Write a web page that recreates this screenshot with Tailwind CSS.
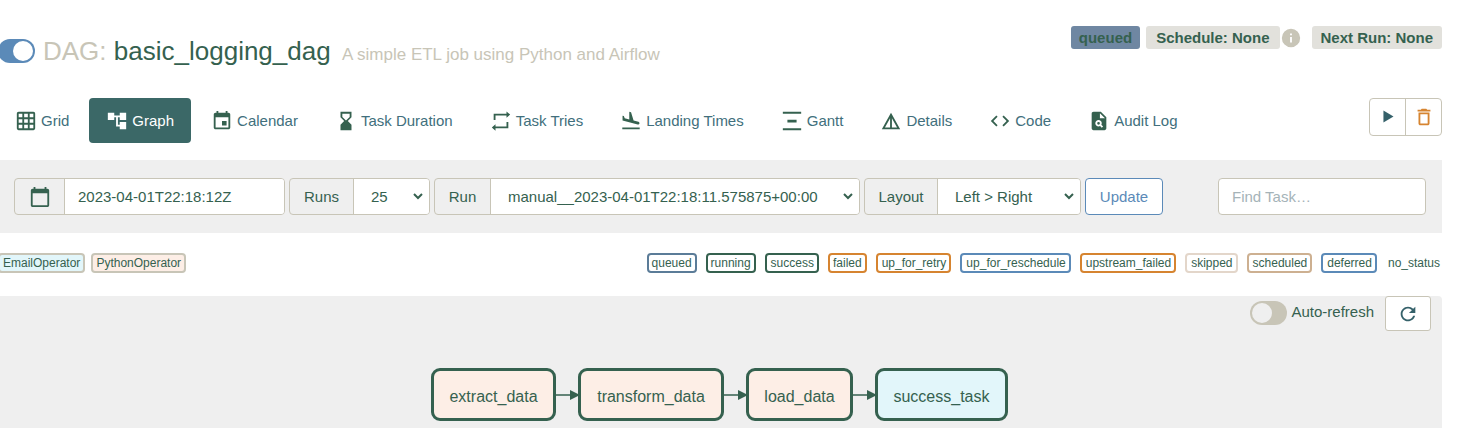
<!DOCTYPE html>
<html lang="en">
<head>
<meta charset="utf-8">
<title>basic_logging_dag - Graph - Airflow</title>
<script src="https://cdn.jsdelivr.net/npm/@tailwindcss/browser@4"></script>
</head>
<body class="overflow-x-hidden bg-white pr-[15px] font-['Liberation_Sans',Arial,sans-serif] text-[15px] leading-5 text-[#35614f]">

<header class="flex items-start justify-between pt-[26px]">
  <div class="flex items-center pt-[7px]">
    <input type="checkbox" checked aria-label="Pause/Unpause DAG" class="-ml-0.5 h-6 w-[37px] appearance-none rounded-full bg-[#5b8ab8] p-0.5 before:ml-[13px] before:block before:size-5 before:rounded-full before:bg-white">
    <h1 class="ml-2 text-[26px] leading-9 whitespace-nowrap"><span class="text-[#c8c5b7]">DAG:</span> <a href="#">basic_logging_dag</a> <small class="ml-1 text-[17px] leading-4 text-[#c8c5b7]">A simple ETL job using Python and Airflow</small></h1>
  </div>
  <div class="flex items-center font-bold leading-[23px] whitespace-nowrap">
    <a href="#" class="rounded-[3px] bg-[#6f87a2] px-2">queued</a>
    <a href="#" class="ml-1.5 rounded-[3px] bg-[#e2e1dc] px-[10px]">Schedule: None</a>
    <svg class="size-[22px] fill-[#c8c5b7]" viewBox="0 0 24 24"><path d="M12 2a10 10 0 1 0 0 20 10 10 0 0 0 0-20zm1 15h-2v-6h2v6zm0-8h-2V7h2v2z"/></svg>
    <span class="ml-2.5 rounded-[3px] bg-[#e2e1dc] px-[9px]">Next Run: None</span>
  </div>
</header>

<div class="mt-[29px] flex items-center justify-between">
  <nav class="-ml-0.5 flex gap-[3px] whitespace-nowrap text-[#416f7c]">
    <a href="#" class="flex h-[45px] items-center gap-1 px-[17px]"><svg class="size-[22px] fill-[#35614f]" viewBox="0 0 24 24"><path d="M20 2H4c-1.100 0-2 .9-2 2v16c0 1.100.9 2 2 2h16c1.100 0 2-.9 2-2V4c0-1.100-.9-2-2-2zM8 20H4v-4h4v4zm0-6H4v-4h4v4zm0-6H4V4h4v4zm6 12h-4v-4h4v4zm0-6h-4v-4h4v4zm0-6h-4V4h4v4zm6 12h-4v-4h4v4zm0-6h-4v-4h4v4zm0-6h-4V4h4v4z"/></svg>Grid</a>
    <a href="#" aria-current="page" class="flex h-[45px] items-center gap-1 rounded bg-[#3b6867] px-[17px] text-white"><svg class="size-[22px] fill-white" viewBox="0 0 24 24"><path d="M22 11V3h-7v3H9V3H2v8h7V8h2v10h4v3h7v-8h-7v3h-2V8h2v3z"/></svg>Graph</a>
    <a href="#" class="flex h-[45px] items-center gap-1 px-[17px]"><svg class="size-[22px] fill-[#35614f]" viewBox="0 0 24 24"><path d="M17 12h-5v5h5v-5zM16 1v2H8V1H6v2H5c-1.110 0-1.990.9-1.990 2L3 19c0 1.100.89 2 2 2h14c1.100 0 2-.9 2-2V5c0-1.100-.9-2-2-2h-1V1h-2zm3 18H5V8h14v11z"/></svg>Calendar</a>
    <a href="#" class="flex h-[45px] items-center gap-1 px-[17px]"><svg class="size-[22px] fill-[#35614f]" viewBox="0 0 24 24"><path d="M18 22l-.01-6L14 12l3.990-4.010L18 2H6v6l4 4-4 3.990V22h12zM8 7.500V4h8v3.500l-4 4-4-4z"/></svg>Task Duration</a>
    <a href="#" class="flex h-[45px] items-center gap-1 px-[17px]"><svg class="size-[22px] fill-[#35614f]" viewBox="0 0 24 24"><path d="M4 4h14V1.500L22 5l-4 3.500V6H6v5H4zM20 20H6v2.500L2 19l4-3.500V18h12v-5h2z"/></svg>Task Tries</a>
    <a href="#" class="flex h-[45px] items-center gap-1 px-[17px]"><svg class="size-[22px] fill-[#35614f]" viewBox="0 0 24 24"><path d="M2.500 19h19v2h-19zm16.840-3.150c.8.210 1.620-.26 1.840-1.060.210-.8-.26-1.620-1.060-1.840l-5.310-1.420-2.760-9.020L10.120 2v8.280L5.150 8.950l-.93-2.320-1.450-.39v5.170l16.570 4.440z"/></svg>Landing Times</a>
    <a href="#" class="flex h-[45px] items-center gap-1 px-[17px]"><svg class="size-[22px] fill-[#35614f]" viewBox="0 0 24 24"><path d="M22 2v2H2V2h20zM7 10.500v3h10v-3H7zM2 20v2h20v-2H2z"/></svg>Gantt</a>
    <a href="#" class="flex h-[45px] items-center gap-1 px-[17px]"><svg class="size-[22px] fill-[#35614f]" viewBox="0 0 24 24"><path d="M12 3L2 21h20L12 3zm1 5.920L18.600 19H13V8.920zm-2 0V19H5.400L11 8.920z"/></svg>Details</a>
    <a href="#" class="flex h-[45px] items-center gap-1 px-[17px]"><svg class="size-[22px] fill-[#35614f]" viewBox="0 0 24 24"><path d="M9.400 16.600L4.800 12l4.600-4.600L8 6l-6 6 6 6 1.400-1.400zm5.200 0l4.600-4.600-4.600-4.600L16 6l6 6-6 6-1.400-1.400z"/></svg>Code</a>
    <a href="#" class="flex h-[45px] items-center gap-1 px-[17px]"><svg class="size-[22px] fill-[#35614f]" viewBox="0 0 24 24"><path fill-rule="evenodd" d="M14 2H6C4.900 2 4 2.900 4 4v16c0 1.100.89 2 1.990 2H18c1.100 0 2-.9 2-2V8l-6-6zm1.040 17.450l-1.880-1.880c-1.330.71-3.010.53-4.130-.59-1.370-1.370-1.370-3.580 0-4.950 1.370-1.370 3.580-1.370 4.950 0 1.120 1.120 1.310 2.800.59 4.130l1.880 1.880-1.410 1.410zM13 9V3.500L18.500 9H13zM11.500 13a1.500 1.500 0 1 0 0 3 1.500 1.500 0 0 0 0-3z"/></svg>Audit Log</a>
  </nav>
  <div class="mb-[7px] flex h-[38px] rounded border border-[#c8c5b7]">
    <button aria-label="Trigger DAG" class="flex w-9 items-center justify-center border-r border-[#c8c5b7]"><svg class="size-[22px] fill-[#35616a]" viewBox="0 0 24 24"><path d="M7 5v13l11-6.500z"/></svg></button>
    <button aria-label="Delete DAG" class="flex w-[35px] items-center justify-center"><svg class="size-[22px] fill-[#d68430]" viewBox="0 0 24 24"><path d="M6 19c0 1.100.9 2 2 2h8c1.100 0 2-.9 2-2V7H6v12zM8 9h8v10H8V9zm7.500-5l-1-1h-5l-1 1H5v2h14V4z"/></svg></button>
  </div>
</div>

<form class="mt-[17px] flex items-center bg-[#efefef] py-[18px] pr-4 pl-3.5">
  <div class="flex flex-1 gap-1">
    <div class="flex h-[37px] w-[271px] overflow-hidden rounded border border-[#c8c5b7]">
      <label for="base" class="flex w-[50px] shrink-0 items-center justify-center border-r border-[#c8c5b7]"><svg class="size-[22px] fill-[#35614f]" viewBox="0 0 24 24"><path d="M20 3h-1V1h-2v2H7V1H5v2H4c-1.100 0-2 .9-2 2v16c0 1.100.9 2 2 2h16c1.100 0 2-.9 2-2V5c0-1.100-.9-2-2-2zm0 18H4V8h16v13z"/></svg></label>
      <input id="base" type="text" aria-label="Base date" value="2023-04-01T22:18:12Z" class="min-w-0 flex-1 bg-white px-[13px]">
    </div>
    <div class="flex h-[37px] w-[141px] overflow-hidden rounded border border-[#c8c5b7]">
      <label for="runs" class="flex w-16 shrink-0 items-center justify-center border-r border-[#c8c5b7]">Runs</label>
      <select id="runs" class="min-w-0 flex-1 border-r-3 border-transparent bg-white pl-[13px]"><option>25</option></select>
    </div>
    <div class="flex h-[37px] w-[426px] overflow-hidden rounded border border-[#c8c5b7]">
      <label for="run" class="flex w-14 shrink-0 items-center justify-center border-r border-[#c8c5b7]">Run</label>
      <select id="run" class="min-w-0 flex-1 border-r-3 border-transparent bg-white pl-[13px]"><option>manual__2023-04-01T22:18:11.575875+00:00</option></select>
    </div>
    <div class="flex h-[37px] w-[217px] overflow-hidden rounded border border-[#c8c5b7]">
      <label for="layout" class="flex w-[73px] shrink-0 items-center justify-center border-r border-[#c8c5b7]">Layout</label>
      <select id="layout" class="min-w-0 flex-1 border-r-3 border-transparent bg-white pl-[13px]"><option>Left &gt; Right</option></select>
    </div>
    <button type="submit" class="h-[37px] w-[78px] rounded border border-[#5b8ab8] bg-white text-[#5b8ab8]">Update</button>
  </div>
  <input type="search" aria-label="Find Task" placeholder="Find Task…" class="h-[37px] w-52 rounded border border-[#c8c5b7] bg-white px-[13px] placeholder:text-[#a5b3b8]">
</form>

<div class="mt-5 flex justify-between text-xs leading-4 whitespace-nowrap">
  <div class="-ml-0.5 flex gap-1.5">
    <span class="rounded border-2 border-[#c8c5b7] bg-[#e2f6fa] px-[3px]">EmailOperator</span>
    <span class="rounded border-2 border-[#c8c5b7] bg-[#fdeee6] px-[3px]">PythonOperator</span>
  </div>
  <div class="flex gap-[9px]">
    <span class="rounded border-2 border-[#5b7c98] px-[3px]">queued</span>
    <span class="rounded border-2 border-[#35614f] px-[3px]">running</span>
    <span class="rounded border-2 border-[#35614f] pr-[3px] pl-1">success</span>
    <span class="rounded border-2 border-[#d68430] px-[3px]">failed</span>
    <span class="rounded border-2 border-[#d68430] pr-[3px] pl-1">up_for_retry</span>
    <span class="rounded border-2 border-[#5b8ab8] pr-[3px] pl-1">up_for_reschedule</span>
    <span class="rounded border-2 border-[#d68430] pr-[3px] pl-1">upstream_failed</span>
    <span class="rounded border-2 border-[#e3d6ca] pr-[3px] pl-1">skipped</span>
    <span class="rounded border-2 border-[#cdb091] pr-[3px] pl-1">scheduled</span>
    <span class="rounded border-2 border-[#5b8ab8] pr-[3px] pl-1">deferred</span>
    <span class="border-y-2 border-transparent px-0.5">no_status</span>
  </div>
</div>

<main class="mt-[23px] rounded-tr bg-[#efefef] pb-[7px]">
  <div class="flex items-start justify-end pr-[11px]">
    <label class="mt-[5px] flex items-center gap-1"><input type="checkbox" class="h-6 w-[37px] appearance-none rounded-full bg-[#c8c5b7] p-0.5 before:block before:size-5 before:rounded-full before:bg-[#efefef]"><span class="pb-0.5">Auto-refresh</span></label>
    <button aria-label="Refresh" class="ml-[11px] flex h-[35px] w-[46px] items-center justify-center rounded-[3px] border border-[#c8c5b7] bg-white"><svg class="size-[22px] fill-[#35616a]" viewBox="0 0 24 24"><path d="M17.650 6.350C16.200 4.900 14.210 4 12 4c-4.420 0-7.990 3.580-7.990 8s3.570 8 7.990 8c3.730 0 6.840-2.550 7.730-6h-2.080c-.82 2.330-3.040 4-5.650 4-3.310 0-6-2.690-6-6s2.690-6 6-6c1.660 0 3.140.69 4.220 1.780L13 11h7V4l-2.350 2.350z"/></svg></button>
  </div>
  <div class="mt-[37px] flex items-center justify-center pr-[3px] text-base">
    <div class="flex h-[53px] w-[125px] items-center justify-center rounded-[9px] border-3 border-[#35614f] bg-[#fdeee6] pt-1">extract_data</div>
    <svg class="h-3 w-[22px]" viewBox="0 0 22 12"><path d="M0 6h16" stroke="#35614f" stroke-width="1.500"/><path d="M14 1l10 5-10 5z" fill="#35614f"/></svg>
    <div class="flex h-[53px] w-[146px] items-center justify-center rounded-[9px] border-3 border-[#35614f] bg-[#fdeee6] pt-1">transform_data</div>
    <svg class="h-3 w-[22px]" viewBox="0 0 22 12"><path d="M0 6h16" stroke="#35614f" stroke-width="1.500"/><path d="M14 1l10 5-10 5z" fill="#35614f"/></svg>
    <div class="flex h-[53px] w-[107px] items-center justify-center rounded-[9px] border-3 border-[#35614f] bg-[#fdeee6] pt-1">load_data</div>
    <svg class="h-3 w-[22px]" viewBox="0 0 22 12"><path d="M0 6h16" stroke="#35614f" stroke-width="1.500"/><path d="M14 1l10 5-10 5z" fill="#35614f"/></svg>
    <div class="flex h-[53px] w-[133px] items-center justify-center rounded-[9px] border-3 border-[#35614f] bg-[#e2f6fa] pt-1">success_task</div>
  </div>
</main>
</body>
</html>
